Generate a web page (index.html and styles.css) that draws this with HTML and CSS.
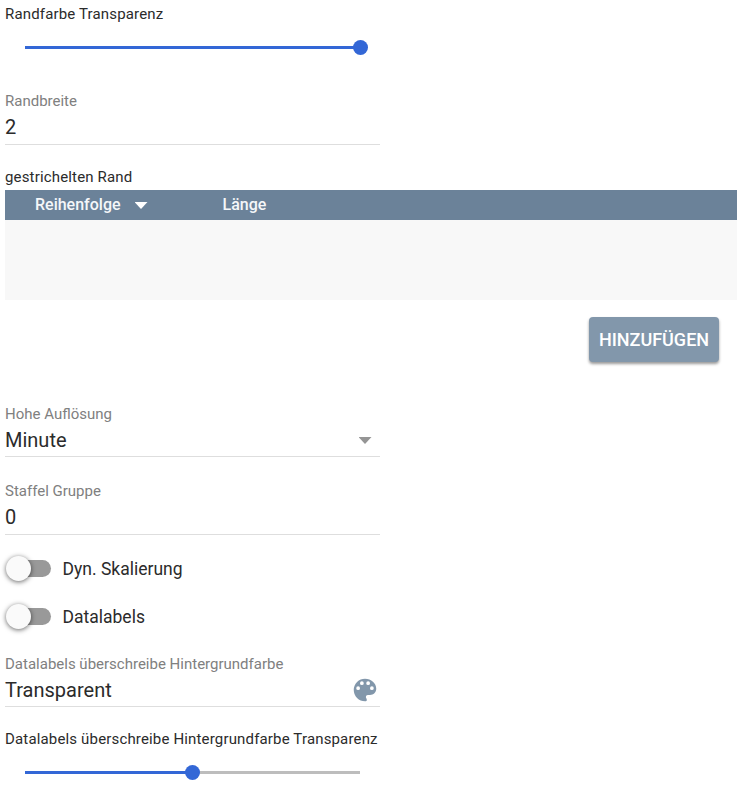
FILE: index.html
```
<!DOCTYPE html>
<html lang="de"><head><meta charset="utf-8"><title>Einstellungen</title><link rel="stylesheet" href="styles.css"></head>
<body>
<main class="form">
<section class="slider first"><div class="caption">Randfarbe Transparenz</div><div class="track full"><i class="thumb"></i></div></section>
<div class="field"><label>Randbreite</label><div class="value">2</div></div>
<section class="dashes"><div class="caption">gestrichelten Rand</div>
<div class="table"><div class="head"><span class="order">Reihenfolge</span><i class="arrow light"></i><span class="length">Länge</span></div></div>
<div class="actions"><button>HINZUFÜGEN</button></div></section>
<div class="field resolution"><label>Hohe Auflösung</label><div class="value">Minute<i class="arrow"></i></div></div>
<div class="field group"><label>Staffel Gruppe</label><div class="value">0</div></div>
<div class="toggle"><span class="switch"></span><span class="name">Dyn. Skalierung</span></div>
<div class="toggle"><span class="switch"></span><span class="name">Datalabels</span></div>
<div class="field color"><label>Datalabels überschreibe Hintergrundfarbe</label><div class="value">Transparent<svg class="palette" viewBox="0 0 24 24"><path d="M12 3a9 9 0 0 0 0 18c.9 0 1.400-.15 1.400-.6V19.500c0-.4-.2-.7-.4-1-.2-.26-.28-.61-.28-.99 0-.83.67-1.5 1.5-1.5H16c2.76 0 5-2.24 5-5 0-4.42-4.03-8-9-8zm-5.500 9a1.500 1.500 0 1 1 0-3 1.500 1.500 0 0 1 0 3zm3-4a1.500 1.500 0 1 1 0-3 1.500 1.500 0 0 1 0 3zm5 0a1.500 1.500 0 1 1 0-3 1.500 1.500 0 0 1 0 3zm3 4a1.500 1.500 0 1 1 0-3 1.500 1.500 0 0 1 0 3z"/></svg></div></div>
<section class="slider last"><div class="caption">Datalabels überschreibe Hintergrundfarbe Transparenz</div><div class="track half"><i class="thumb"></i></div></section>
</main></body></html>
```
FILE: styles.css
```
* { box-sizing: border-box; }
body { margin: 0; background: #fff; color: #2b2b2b; font-family: Roboto, sans-serif; overflow: hidden; }
.form { padding: 4px 7px 0 5px; height: 790px; }
.caption { font-size: 15px; line-height: 20px; height: 20px; letter-spacing: .16px; white-space: nowrap; }
.slider { width: 375px; }
.first { height: 87px; }
.track { height: 3px; width: 335px; margin: 22px 0 0 20px; display: flex; align-items: center; background: #3367d6; }
.thumb { width: 15px; height: 15px; border-radius: 50%; background: #3367d6; flex: none; }
.full .thumb { margin-left: 328px; }
.half { background: linear-gradient(to right, #3367d6 50%, #bdbdbd 50%); }
.half .thumb { margin-left: 160px; }
.field { width: 375px; height: 54px; border-bottom: 1px solid #dedede; }
.field label { display: block; height: 20px; line-height: 20px; font-size: 15px; color: #808080; }
.value { height: 33px; line-height: 33px; font-size: 20px; display: flex; justify-content: space-between; align-items: center; }
.dashes { margin-top: 22px; }
.table { height: 110px; margin-top: 3px; background: #f8f8f8; }
.head { height: 30px; background: #6b8299; color: #f5f7f9; display: flex; align-items: center; padding-left: 30px; font-size: 16px; line-height: 18px; font-weight: 500; }
.order { width: 99px; }
.arrow { width: 13px; height: 7px; background: #959595; clip-path: polygon(0 0, 100% 0, 50% 100%); margin-right: 8.5px; flex: none; }
.arrow.light { background: #fff; margin: 1px 0 0 .5px; }
.length { margin-left: 75px; }
.actions { display: flex; justify-content: flex-end; padding: 17px 18px 0 0; }
button { border: 0; width: 130px; height: 45px; padding: 0; border-radius: 4px; background: #8297ab; color: #fff; font: 500 18px Roboto, sans-serif; box-shadow: 0 2px 3px #0006; }
.resolution { margin-top: 42px; height: 53px; }
.group { margin-top: 24px; margin-bottom: 9px; }
.toggle { height: 48px; display: flex; align-items: center; font-size: 17.5px; }
.name { padding-top: 2px; }
.switch { width: 40px; height: 17px; border-radius: 9px; background: #999; margin: 0 11.5px 0 6px; display: flex; align-items: center; }
.switch::before { content: ""; width: 25px; height: 25px; margin-left: -5px; border-radius: 50%; background: #fafafa; box-shadow: 0 1px 5px #0009; flex: none; }
.color { margin-top: 14px; height: 53px; }
.color .value { height: 32px; line-height: 32px; }
.palette { width: 30px; height: 30px; fill: #8297ab; }
.last { margin-top: 22px; }
```
